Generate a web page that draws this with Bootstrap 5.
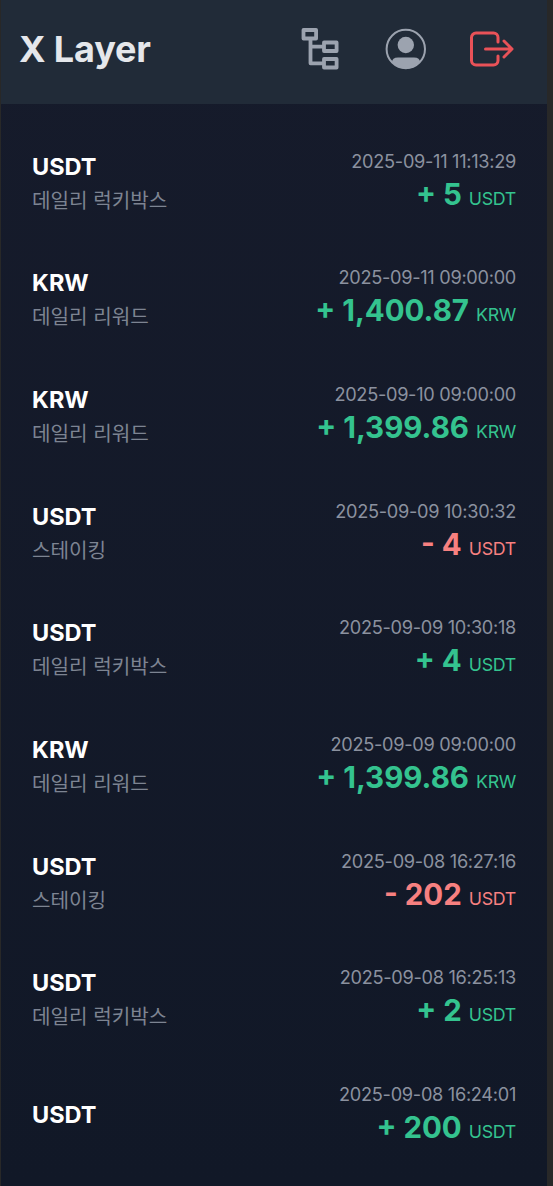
<!DOCTYPE html>
<html lang="ko">
<head>
<meta charset="utf-8">
<meta name="viewport" content="width=device-width, initial-scale=1">
<title>X Layer</title>
<link href="https://cdn.jsdelivr.net/npm/bootstrap@5.3.0/dist/css/bootstrap.min.css" rel="stylesheet">
<style>
body { background: #282828; font-family: Inter, "Noto Sans CJK KR", sans-serif; height: 1186px; overflow: hidden; }
.app-shell { margin: 0 6px 0 1px; height: 1186px; background: linear-gradient(#161b2b, #111827); overflow: hidden; }
.app-header { height: 104px; background: #212b38; padding: 0 33px 6px 18px; }
.app-title { font-size: 36px; font-weight: 700; letter-spacing: -.15px; color: #e5e7eb; line-height: 1; }
.icon-row { gap: 42px; color: #9ca3af; }
.icon-row button { line-height: 0; color: inherit; }
.icon-row .logout { color: #e95258; }
.history { padding: 19.500px 31px 0; }
.entry { height: 116.67px; }
.source { padding-top: 3px; }
.coin { font-size: 23.500px; font-weight: 700; color: #fff; line-height: 34px; }
.memo { font-size: 20.150px; color: #7d8492; line-height: 33px; font-weight: 400; }
.stamp { font-size: 18.200px; letter-spacing: -.3px; color: #8b919f; line-height: 29px; }
.amount { font-size: 29.500px; font-weight: 700; line-height: 37px; }
.unit { font-size: 17.800px; font-weight: 400; letter-spacing: -.3px; }
.plus { color: #34c38f; }
.minus { color: #f78080; }
</style>
<script src="https://cdn.jsdelivr.net/npm/bootstrap@5.3.0/dist/js/bootstrap.bundle.min.js"></script>
</head>
<body>
<div class="app-shell">
  <header class="app-header d-flex align-items-center justify-content-between">
    <h1 class="app-title m-0">X Layer</h1>
    <nav class="icon-row d-flex align-items-center">
      <button class="btn p-0 border-0" aria-label="Tree">
        <svg width="42" height="42" viewBox="0 0 42 42" fill="none" stroke="currentColor" stroke-width="3.800" stroke-linejoin="round"><rect x="3.500" y="2" width="12.600" height="8.500"/><rect x="24" y="14.500" width="12.600" height="8.500"/><rect x="24" y="31" width="12.600" height="8.500"/><path d="M10.500 10.500v24.800H24M10.500 18.700H24"/></svg>
      </button>
      <button class="btn p-0 border-0" aria-label="Profile">
        <svg width="42" height="42" viewBox="0 0 42 42"><circle cx="21.800" cy="21" r="19.200" fill="none" stroke="currentColor" stroke-width="2"/><circle cx="21.800" cy="17" r="8.200" fill="currentColor"/><path fill="currentColor" d="M8 34.500Q8 29.500 14 29.500H30Q36 29.500 36 34.500A19.500 19.500 0 0 1 8 34.500Z"/></svg>
      </button>
      <button class="btn p-0 border-0 logout" aria-label="Logout">
        <svg width="46" height="42" viewBox="0 0 46 42" fill="none" stroke="currentColor" stroke-width="3" stroke-linecap="round" stroke-linejoin="round"><path d="M30 14V9.500a4.500 4.500 0 0 0-4.500-4.500H8A4.500 4.500 0 0 0 3.500 9.500v23A4.500 4.500 0 0 0 8 37H25.500a4.500 4.500 0 0 0 4.500-4.500V28M17.500 21H43.500M36 13l8 8-8 8"/></svg>
      </button>
    </nav>
  </header>
  <main class="history">
    <div class="entry d-flex align-items-center justify-content-between"><div class="source"><div class="coin">USDT</div><div class="memo">데일리 럭키박스</div></div><div class="text-end"><div class="stamp">2025-09-11 11:13:29</div><div class="amount plus">+ 5 <span class="unit">USDT</span></div></div></div>
    <div class="entry d-flex align-items-center justify-content-between"><div class="source"><div class="coin">KRW</div><div class="memo">데일리 리워드</div></div><div class="text-end"><div class="stamp">2025-09-11 09:00:00</div><div class="amount plus">+ 1,400.87 <span class="unit">KRW</span></div></div></div>
    <div class="entry d-flex align-items-center justify-content-between"><div class="source"><div class="coin">KRW</div><div class="memo">데일리 리워드</div></div><div class="text-end"><div class="stamp">2025-09-10 09:00:00</div><div class="amount plus">+ 1,399.86 <span class="unit">KRW</span></div></div></div>
    <div class="entry d-flex align-items-center justify-content-between"><div class="source"><div class="coin">USDT</div><div class="memo">스테이킹</div></div><div class="text-end"><div class="stamp">2025-09-09 10:30:32</div><div class="amount minus">- 4 <span class="unit">USDT</span></div></div></div>
    <div class="entry d-flex align-items-center justify-content-between"><div class="source"><div class="coin">USDT</div><div class="memo">데일리 럭키박스</div></div><div class="text-end"><div class="stamp">2025-09-09 10:30:18</div><div class="amount plus">+ 4 <span class="unit">USDT</span></div></div></div>
    <div class="entry d-flex align-items-center justify-content-between"><div class="source"><div class="coin">KRW</div><div class="memo">데일리 리워드</div></div><div class="text-end"><div class="stamp">2025-09-09 09:00:00</div><div class="amount plus">+ 1,399.86 <span class="unit">KRW</span></div></div></div>
    <div class="entry d-flex align-items-center justify-content-between"><div class="source"><div class="coin">USDT</div><div class="memo">스테이킹</div></div><div class="text-end"><div class="stamp">2025-09-08 16:27:16</div><div class="amount minus">- 202 <span class="unit">USDT</span></div></div></div>
    <div class="entry d-flex align-items-center justify-content-between"><div class="source"><div class="coin">USDT</div><div class="memo">데일리 럭키박스</div></div><div class="text-end"><div class="stamp">2025-09-08 16:25:13</div><div class="amount plus">+ 2 <span class="unit">USDT</span></div></div></div>
    <div class="entry d-flex align-items-center justify-content-between"><div><div class="coin">USDT</div></div><div class="text-end"><div class="stamp">2025-09-08 16:24:01</div><div class="amount plus">+ 200 <span class="unit">USDT</span></div></div></div>
  </main>
</div>
</body>
</html>
